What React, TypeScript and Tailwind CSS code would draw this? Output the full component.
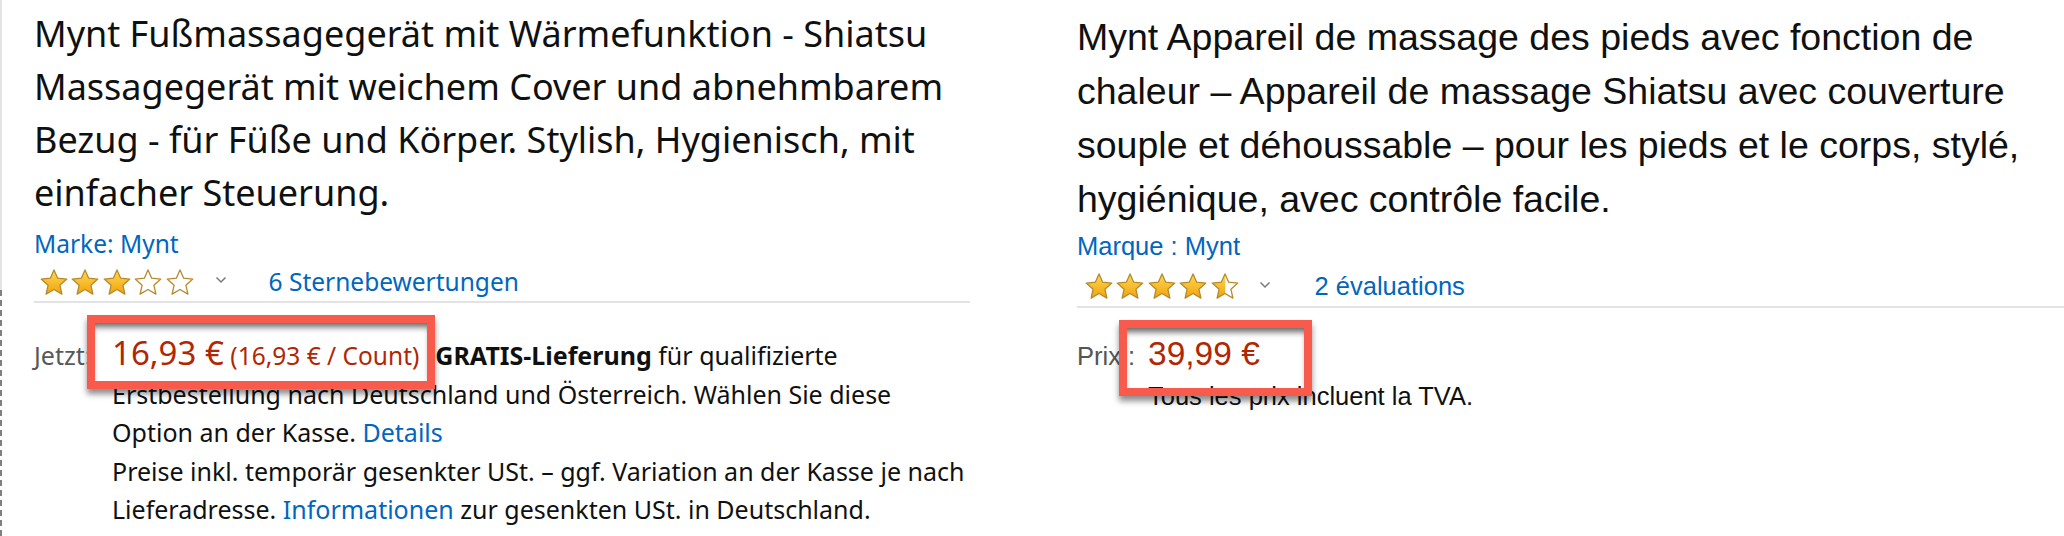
import React, { useId } from 'react';

type Fill = 'full' | 'half' | 'empty';

const STAR_POINTS =
  '14,0.9 17.7,9.2 26.8,10.1 19.9,16.2 21.9,25.1 14,20.5 6.1,25.1 8.1,16.2 1.2,10.1 10.3,9.2';

function Star({ fill }: { fill: Fill }) {
  const id = useId().replace(/[^a-zA-Z0-9]/g, '');
  return (
    <svg width="28" height="26" viewBox="0 0 28 26" className="shrink-0">
      <defs>
        <linearGradient id={`g${id}`} x1="0" y1="0" x2="0" y2="1">
          <stop offset="0" stopColor="#ffd94f" />
          <stop offset="1" stopColor="#eea310" />
        </linearGradient>
        <clipPath id={`c${id}`}>
          <rect x="0" y="0" width={fill === 'half' ? 14.3 : 28} height="26" />
        </clipPath>
      </defs>
      <polygon points={STAR_POINTS} fill="#fff" />
      {fill !== 'empty' && (
        <polygon points={STAR_POINTS} fill={`url(#g${id})`} clipPath={`url(#c${id})`} />
      )}
      <polygon
        points={STAR_POINTS}
        fill="none"
        stroke="#b8892c"
        strokeWidth="1.3"
        strokeLinejoin="round"
      />
    </svg>
  );
}

function Chevron({ className }: { className: string }) {
  return (
    <svg width="12" height="8" viewBox="0 0 12 8" className={className}>
      <path d="M1.5 1.5l4.5 4.5 4.5-4.5" fill="none" stroke="#7a7a7a" strokeWidth="1.5" />
    </svg>
  );
}

// screenshot-style red highlight box drawn over the price
function Highlight({ className }: { className: string }) {
  return (
    <div
      className={`pointer-events-none absolute border-[8px] border-[#f85a4b] shadow-[0_5px_6px_rgba(0,0,0,0.45),inset_0_7px_6px_-3px_rgba(0,0,0,0.6)] ${className}`}
    />
  );
}

const deTitle = [
  'Mynt Fußmassagegerät mit Wärmefunktion - Shiatsu',
  'Massagegerät mit weichem Cover und abnehmbarem',
  'Bezug - für Füße und Körper. Stylish, Hygienisch, mit',
  'einfacher Steuerung.',
];

const frTitle = [
  'Mynt Appareil de massage des pieds avec fonction de',
  'chaleur – Appareil de massage Shiatsu avec couverture',
  'souple et déhoussable – pour les pieds et le corps, stylé,',
  'hygiénique, avec contrôle facile.',
];

function App() {
  return (
    <div className="flex h-[536px] w-[2064px] overflow-hidden bg-white">
      {/* left edge of the cropped page */}
      <div className="flex w-[2px] shrink-0 flex-col">
        <div className="h-[290px] bg-[#e4e4e4]" />
        <div className="flex-1 border-l-2 border-dashed border-[#808080]" />
      </div>

      {/* German listing */}
      <section className="relative w-[1038px] shrink-0 pl-[32px] pr-[70px] font-['Noto_Sans',sans-serif] text-[#0f1111]">
        <h1 className="pt-[7px] text-[36px] leading-[53px] font-normal">
          {deTitle.map((line) => (
            <span key={line} className="block whitespace-nowrap">
              {line}
            </span>
          ))}
        </h1>
        <a className="mt-[9px] block text-[24.5px] leading-[32px] text-[#0066c0]">Marke: Mynt</a>

        <div className="mt-[7px] flex h-[30px] items-center">
          <div className="ml-[6px] flex gap-[3.4px]">
            <Star fill="full" />
            <Star fill="full" />
            <Star fill="full" />
            <Star fill="empty" />
            <Star fill="empty" />
          </div>
          <Chevron className="-mt-[4px] ml-[21px]" />
          <a className="ml-[42px] text-[24.5px] leading-[30px] text-[#0066c0]">6 Sternebewertungen</a>
        </div>
        <div className="mt-[4px] h-[2px] bg-[#e3e3e3]" />

        <div className="grid grid-cols-[78px_1fr] items-baseline pt-[33px] text-[25px] leading-[38.5px]">
          <span className="text-[#565959]">Jetzt:</span>
          <div className="whitespace-nowrap">
            <div>
              <span className="text-[33px] leading-[30px] text-[#b12704]">16,93 €</span>{' '}
              <span className="text-[24.5px] leading-[30px] text-[#b12704]">(16,93 € / Count)</span>
              <span className="ml-[16px] font-bold">GRATIS-Lieferung</span> für qualifizierte
            </div>
            <div>Erstbestellung nach Deutschland und Österreich. Wählen Sie diese</div>
            <div>
              Option an der Kasse. <a className="text-[#0066c0]">Details</a>
            </div>
            <div>Preise inkl. temporär gesenkter USt. – ggf. Variation an der Kasse je nach</div>
            <div>
              Lieferadresse. <a className="text-[#0066c0]">Informationen</a> zur gesenkten USt. in Deutschland.
            </div>
          </div>
        </div>

        <Highlight className="left-[85px] top-[315px] h-[74px] w-[348px]" />
      </section>

      {/* French listing */}
      <section className="relative flex-1 pl-[37px] font-['Liberation_Sans',Arial,sans-serif] text-[#0f1111]">
        <h1 className="pt-[10px] text-[37.5px] leading-[54px] font-normal">
          {frTitle.map((line) => (
            <span key={line} className="block whitespace-nowrap">
              {line}
            </span>
          ))}
        </h1>
        <a className="mt-[5px] block text-[25.5px] leading-[30px] text-[#0066c0]">Marque : Mynt</a>

        <div className="mt-[10px] flex h-[30px] items-center">
          <div className="ml-[8px] flex gap-[3.4px]">
            <Star fill="full" />
            <Star fill="full" />
            <Star fill="full" />
            <Star fill="full" />
            <Star fill="half" />
          </div>
          <Chevron className="-mt-[2px] ml-[20px]" />
          <a className="ml-[44px] text-[25.5px] leading-[30px] text-[#0066c0]">2 évaluations</a>
        </div>
        <div className="mt-[5px] h-[2px] bg-[#e3e3e3]" />

        <div className="grid grid-cols-[71px_1fr] items-baseline pt-[26px] text-[25.5px] leading-[40px]">
          <span className="text-[#555555]">Prix :</span>
          <div className="whitespace-nowrap">
            <div className="text-[33.5px] text-[#b12704]">39,99 €</div>
            <div className="mt-[3px] leading-[38px]">Tous les prix incluent la TVA.</div>
          </div>
        </div>

        <Highlight className="left-[79px] top-[320px] h-[76px] w-[193px]" />
      </section>
    </div>
  );
}

export default App;
